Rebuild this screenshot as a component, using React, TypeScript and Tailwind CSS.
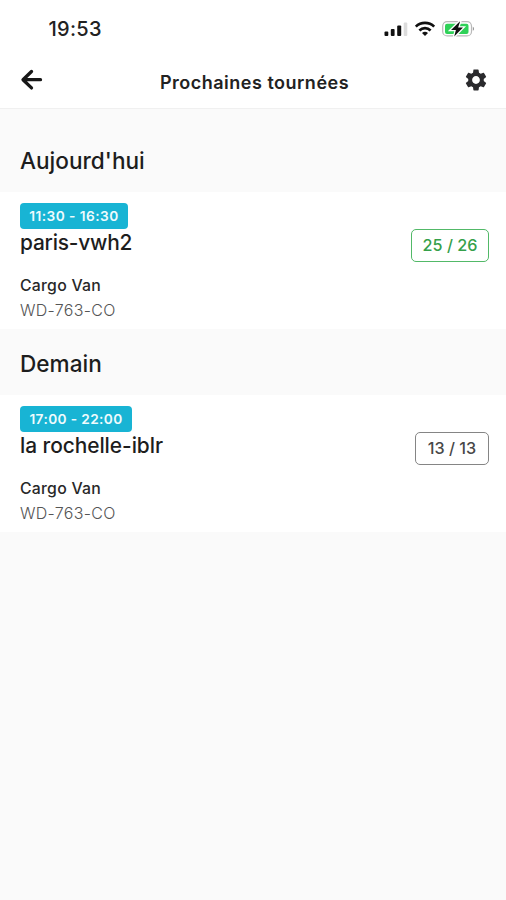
import React from "react";
import { MdSettings } from "react-icons/md";

type Tour = {
  day: string;
  time: string;
  name: string;
  vehicle: string;
  plate: string;
  count: string;
  dayClass: string;
  timeClass: string;
  nameClass: string;
  countClass: string;
};

const tours: Tour[] = [
  {
    day: "Aujourd'hui",
    time: "11:30 - 16:30",
    name: "paris-vwh2",
    vehicle: "Cargo Van",
    plate: "WD-763-CO",
    count: "25 / 26",
    dayClass: "h-[83px] pt-[36px]",
    timeClass: "w-[108px] tracking-[0.460px]",
    nameClass: "tracking-[-0.200px]",
    countClass: "w-[78px] border-[#52b968] text-[#35a04a]",
  },
  {
    day: "Demain",
    time: "17:00 - 22:00",
    name: "la rochelle-iblr",
    vehicle: "Cargo Van",
    plate: "WD-763-CO",
    count: "13 / 13",
    dayClass: "h-[66px] pt-[19px]",
    timeClass: "w-[112px] tracking-[0.360px]",
    nameClass: "tracking-[-0.060px]",
    countClass: "w-[74px] border-[#858585] text-[#484848]",
  },
];

function StatusIcons() {
  return (
    <svg width="94" height="20" viewBox="0 0 94 20" className="block">
      <g fill="#111">
        <rect x="4.500" y="12.500" width="3.800" height="4.500" rx="1" />
        <rect x="10.800" y="10" width="3.800" height="7" rx="1" />
        <rect x="17.200" y="6.500" width="4" height="10.500" rx="1" />
      </g>
      <rect x="23.700" y="3.500" width="3.600" height="13.500" rx="1" fill="#dcdcdc" />
      <g fill="none" stroke="#111" strokeWidth="2.700">
        <path d="M35.800 7.600a13.300 13.300 0 0 1 18.400 0" />
        <path d="M39.400 11.500a8 8 0 0 1 11.200 0" />
      </g>
      <path d="M45 17l-3-3a4.500 4.500 0 0 1 6 0z" fill="#111" />
      <rect x="62.700" y="2.700" width="28.800" height="14.200" rx="4.500" fill="#fff" stroke="#b9b9b9" strokeWidth="1.200" />
      <rect x="65" y="4.700" width="23.500" height="10.200" rx="2" fill="#2fd158" />
      <path d="M92.800 7.800c1.700.5 1.700 3.500 0 4z" fill="#999" />
      <path d="M79.800 2.500l-8.800 8.500h4.900l-1.700 6.500 8.800-9h-4.900l2-6z" fill="#111" stroke="#fff" strokeWidth="2.600" paintOrder="stroke" />
    </svg>
  );
}

function TourSection({ tour }: { tour: Tour }) {
  return (
    <section>
      <h2 className={`pl-5 text-[22.600px] leading-[32px] font-[450] text-[#1d1d1d] ${tour.dayClass}`}>{tour.day}</h2>
      <div className="flex h-[137px] justify-between bg-white pt-[11px] pr-[17px] pl-5">
        <div className="flex flex-col items-start">
          <span className={`flex h-[26px] items-center justify-center rounded-[4px] bg-[#18b4d4] text-[13.700px] font-semibold text-[#effbfd] ${tour.timeClass}`}>
            {tour.time}
          </span>
          <span className={`text-[20.900px] leading-[28px] font-[450] text-[#1d1d1d] ${tour.nameClass}`}>{tour.name}</span>
          <span className="mt-[16px] text-[15.800px] leading-[25px] font-medium tracking-[0.250px] text-[#282828]">{tour.vehicle}</span>
          <span className="text-[16px] leading-[25px] font-light tracking-[0.300px] text-[#555]">{tour.plate}</span>
        </div>
        <span className={`mt-[26px] flex h-[33px] items-center justify-center rounded-[5px] border-[1.500px] text-[16.200px] font-medium ${tour.countClass}`}>
          {tour.count}
        </span>
      </div>
    </section>
  );
}

export default function App() {
  return (
    <main className="h-[900px] w-[506px] overflow-hidden bg-[#fafafa] font-['Inter','Liberation_Sans',sans-serif] whitespace-nowrap">
      <header className="h-[109px] border-b border-[#f0f0f0] bg-white">
        <div className="flex h-[56px] items-center justify-between pt-[2px] pr-[32px] pl-[48.500px]">
          <span className="text-[20px] font-medium tracking-[0.300px] text-[#222]">19:53</span>
          <StatusIcons />
        </div>
        <div className="flex h-[48px] items-center justify-between pr-[17px] pl-[20px]">
          <button aria-label="Retour" className="flex w-[26px]">
            <svg width="24" height="24" viewBox="0 0 24 24" fill="none" stroke="#171717" strokeWidth="3.300" strokeLinecap="round" strokeLinejoin="round">
              <path d="M11.500 3.500L3 11.700l8.500 8.200M4 11.700h16.500" />
            </svg>
          </button>
          <h1 className="pt-[4px] text-[18px] font-semibold tracking-[0.500px] text-[#222]">Prochaines tournées</h1>
          <button aria-label="Paramètres" className="text-[#2a2a2d]">
            <MdSettings size={26} />
          </button>
        </div>
      </header>
      {tours.map((tour) => (
        <TourSection key={tour.day} tour={tour} />
      ))}
    </main>
  );
}
